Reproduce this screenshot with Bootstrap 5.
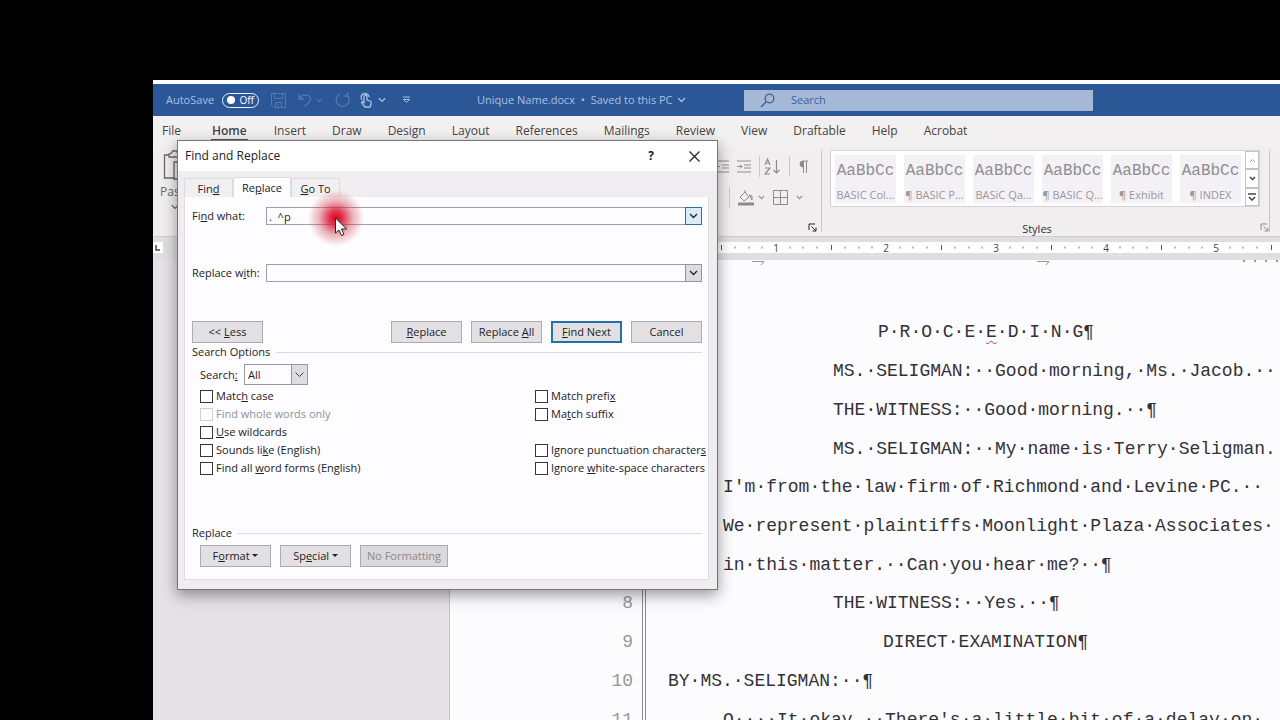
<!DOCTYPE html>
<html lang="en">
<head>
<meta charset="utf-8">
<meta name="viewport" content="width=device-width, initial-scale=1">
<title>Unique Name.docx</title>
<link href="https://cdn.jsdelivr.net/npm/bootstrap@5.3.0/dist/css/bootstrap.min.css" rel="stylesheet">
<style>
  body { background:#000; font-family:"Open Sans","Noto Sans",sans-serif; font-size:12px; line-height:16px; color:#444; }
  button, input, select { font:inherit; color:inherit; }
  svg { display:block; flex:none; fill:none; stroke:currentColor; }
  .desk { padding:80px 0 0 153px; }
  .word-window { background:#e4e2e5; border-top:4px solid #fff; }
  .word-window > :not(:last-child) { flex:none; }

  /* title bar */
  .title-bar { display:grid; grid-template-columns:324fr 267fr 349fr 187fr; height:32px; align-items:center; background:#2b5797; color:#a9c0e4; font-size:11px; }
  .title-bar button { background:none; border:0; padding:0; color:inherit; }
  .title-bar .faint { color:#5378b4; }
  .title-bar .switch { width:37px; height:15px; border:1px solid #eaf0fa; border-radius:8px; color:#fff; font-size:10px; line-height:12px; }
  .knob { width:8px; height:8px; border-radius:50%; background:#fff; }
  .save-icon { margin-left:12px; }
  .search-box { height:21px; background:#a5b9d7; color:#3c5f9c; }
  .search-box input { background:none; border:0; outline:0; padding:0; min-width:0; }
  .search-box input::placeholder { color:#3c5f9c; opacity:1; }

  /* ribbon */
  .ribbon-tabs { height:30px; gap:26px; padding-left:9px; background:#f2f0f1; }
  .ribbon-tabs a { color:#444; text-decoration:none; height:25px; line-height:30px; }
  .ribbon-tabs a.active { font-weight:600; padding:0 1px; border-bottom:2px solid #555; }
  .ribbon { height:91px; background:#f0eeef; color:#8d8b8d; display:grid; grid-template-columns:562px 106px auto 1fr; border-bottom:1px solid #cfcdd0; }
  .ribbon button { background:none; border:0; padding:0; color:inherit; }
  .ribbon .paste { margin-left:7px; gap:4px; color:#6a686a; }
  .rule-v { width:1px; background:#c9c7ca; }
  .rule-v.short { height:21px; }
  .para-group { padding-top:5px; }
  .para-row { height:31px; }
  .para-row.second { padding-left:14px; }
  .launch-row { margin-top:10px; }
  .gallery { border:1px solid #d3d1d4; background:#fff; height:57px; }
  .tiles { gap:8px; padding:0 4px; }
  .ribbon .style-tile { width:61px; height:48px; background:#f3f1f5; color:#99979a; overflow:hidden; white-space:nowrap; font-size:11px; }
  .style-tile b { display:block; font:16px/32px "Liberation Mono",monospace; color:#8f8d90; }
  .ribbon .gal-step { width:14px; flex:1; border:1px solid #c4c2c5; color:#444; }
  .group-name { font-size:11px; line-height:12px; color:#333; }

  /* ruler and page */
  .ruler { height:23px; padding:5px 0 7px; background:#e0dee1; }
  .ruler-strip { background:#fff; height:11px; margin-left:286px; padding-left:272px; min-width:0; }
  .inch { flex:none; width:110px; position:relative; font-size:10px; line-height:12px; text-align:center; color:#444; }
  .inch svg { position:absolute; left:0; top:0; }
  .corner { width:10px; background:#fff; color:#444; }
  .paper { background:#fcfbfe; border-left:1px solid #c4c2c6; margin-left:296px; min-width:0; flex:1; font-family:"Liberation Mono","DejaVu Sans Mono",monospace; font-size:18px; line-height:20px; color:#333136; }
  .numbers { width:183px; color:#98969a; }
  .margin-rule { width:4px; border:solid #8b898d; border-width:0 1px; margin-left:9px; }
  .lines { display:grid; grid-template-rows:repeat(11,1fr); height:426px; align-items:center; white-space:pre; }
  .lines p { margin:0; }
  .header-line { height:53px; color:#98969a; }
  .text-column { padding-left:22px; }
  .ind-1 { padding-left:55px; } .ind-3 { padding-left:165px; } .mid-a { padding-left:210px; } .mid-b { padding-left:215px; }
  .spell { text-decoration:underline wavy #c8324e 1px; text-underline-offset:3px; }

  /* dialog */
  .find-dialog { position:absolute; left:177px; top:140px; width:541px; background:#efedf0; border:1px solid #77757a; box-shadow:0 5px 14px rgba(0,0,0,.4); font-size:11px; color:#222; padding:0 8px 9px 6px; }
  .dlg-title { height:30px; margin:0 -8px 0 -6px; padding:0 16px 0 7px; gap:32px; background:#fff; font-size:12px; }
  .dlg-title button { background:none; border:0; padding:0; width:12px; }
  .dlg-tabs { height:26px; }
  .dlg-tabs button { border:1px solid #dddbde; border-bottom:0; background:#f1eff2; padding:0; height:19px; line-height:17px; width:49px; }
  .dlg-tabs button.active { background:#fdfcfe; height:20px; width:58px; }
  .pane { background:#fdfcfe; border:1px solid #dedce0; border-top:0; padding:10px 6px 12px 7px; }
  .field label { width:74px; }
  .field { height:18px; margin-bottom:39px; }
  .field input { flex:1; min-width:0; height:18px; border:1px solid #a09ea2; border-right:0; background:#fdfcfe; padding:0 2px; outline:0; }
  .drop { width:17px; height:18px; padding:0; border:1px solid #96949a; background:#dedce0; }
  .drop.hot { border-color:#2c7292; background:#d8edf8; }
  .btn-row { gap:9px; }
  .dlg-btn { width:71px; height:22px; padding:0; border:1px solid #adabb0; background:#e2e0e3; line-height:18px; }
  .dlg-btn.main { border:2px solid #2272a6; }
  .dlg-btn:disabled { width:88px; color:#8c8a8e; background:#dad8dc; }
  .legend-row { height:16px; gap:6px; margin-top:1px; }
  .legend-row::after { content:""; flex:1; height:1px; background:#dddbdf; }
  .direction { margin:4px 0 2px; padding-left:8px; }
  .direction label { width:44px; }
  .find-dialog select { appearance:none; width:64px; height:21px; padding:0 3px; border:1px solid #9a989c; border-radius:0; outline:0;
    background:url("data:image/svg+xml,%3Csvg xmlns='http://www.w3.org/2000/svg' width='16' height='19'%3E%3Cpath d='M0 0h16v19H0z' fill='%23dedce0'/%3E%3Cpath d='M.5 0v19' stroke='%23989698'/%3E%3Cpath d='M4.500 7.500l4 4 4-4' fill='none' stroke='%23444'/%3E%3C/svg%3E") right center no-repeat #fdfcfe; }
  .opts { display:grid; grid-template-columns:335px 1fr; grid-template-rows:repeat(5,18px); align-items:center; padding-left:8px; white-space:nowrap; }
  .opts label { display:flex; align-items:center; gap:3px; }
  .opts input { appearance:none; width:13px; height:13px; margin:0; border:1px solid #39373b; background:#fff; }
  .opts .off { color:#929094; } .opts .off input { border-color:#cfcdd1; }
  .glow { position:absolute; left:308px; top:190px; width:56px; height:56px; border-radius:50%; background:radial-gradient(closest-side,#d8001e 0,#dc1434d9 25%,#d0405066 60%,#c0606000 100%); pointer-events:none; }
  .pointer { position:absolute; left:334px; top:217px; pointer-events:none; }
</style>
</head>
<body>
<svg width="0" height="0" class="position-absolute">
  <symbol id="chev" viewBox="0 0 9 6"><path d="M1 1l3.500 3.500L8 1" stroke-width="1.300"/></symbol>
  <symbol id="ticks" viewBox="0 0 110 11"><path d="M.5 3v5" stroke="#555"/><path d="M14 4.500v2M28 4.500v2M41 4.500v2M69 4.500v2M82 4.500v2M96 4.500v2" stroke="#777"/></symbol>
  <symbol id="launch" viewBox="0 0 9 9"><path d="M1 7V1h6M3.500 3.500L8 8M8 4.500V8H4.500"/></symbol>
</svg>

<div class="desk overflow-hidden position-relative vh-100">
<main class="word-window h-100 d-flex flex-column">
  <header class="title-bar">
    <div class="d-flex align-items-center" style="padding-left:13px">
      <label for="autosave">AutoSave</label>
      <button id="autosave" class="switch d-flex align-items-center justify-content-between px-1 ms-2"><span class="knob"></span>Off</button>
      <button class="faint save-icon" aria-label="Save"><svg width="15" height="15"><path d="M.5.5h14v14H3l-2.500-2.500zM3.500.5v5h8v-5M4.500 14.500v-5h6v5M7 11v3"/></svg></button>
      <button class="faint save-icon" aria-label="Undo"><svg width="14" height="14" stroke-width="1.300"><path d="M1 1v5h5M1.500 5.500C4 1 12 1 12.500 6c0 3-3 5-6 7.500"/></svg></button>
      <svg class="faint ms-1" width="7" height="5"><use href="#chev"/></svg>
      <button class="faint save-icon" aria-label="Repeat"><svg width="16" height="16" stroke-width="1.300"><path d="M5 2a6.500 6.500 0 1 0 7 1M12.500 0v4h-4"/></svg></button>
      <button class="ms-2" aria-label="Touch mode"><svg width="15" height="16"><path d="M3 8a4 4 0 1 1 7-3M5 10V4.500a1.500 1.500 0 0 1 3 0V8l3 1q1.500.5 1 3l-1 3H6L2.500 10.500q1-1.500 2.500 0z" stroke-width="1.300"/></svg></button>
      <svg class="ms-1" width="8" height="6"><use href="#chev"/></svg>
      <button class="ms-3" aria-label="Customize toolbar"><svg width="9" height="8"><path d="M1 1h7M1.500 3.500l3 3 3-3z"/></svg></button>
    </div>
    <div class="d-flex align-items-center text-nowrap">Unique Name.docx&nbsp; •&nbsp; Saved to this PC<svg class="ms-1" width="9" height="6"><use href="#chev"/></svg></div>
    <div class="search-box d-flex align-items-center">
      <svg class="ms-3 me-3" width="15" height="15" stroke-width="1.300"><circle cx="9.500" cy="5.500" r="4.300"/><path d="M6.500 8.500L1 14"/></svg>
      <input class="flex-grow-1" type="text" placeholder="Search" aria-label="Search">
    </div>
  </header>

  <nav class="ribbon-tabs d-flex">
    <a href="#" class="me-1">File</a><a href="#" class="active">Home</a><a href="#">Insert</a><a href="#">Draw</a><a href="#">Design</a><a href="#">Layout</a><a href="#">References</a><a href="#">Mailings</a><a href="#">Review</a><a href="#">View</a><a href="#">Draftable</a><a href="#">Help</a><a href="#">Acrobat</a>
  </nav>

  <section class="ribbon">
    <div class="pt-1">
      <button class="paste d-flex flex-column align-items-center">
        <svg width="28" height="30"><path d="M8 5H3.500v23H14M20 5h4v5M8 7V4q3 0 3.500-3h4Q16 4 20 4v3zM13 12h12v17H13z" stroke-width="1.300"/></svg>
        <span>Paste</span><svg width="8" height="6"><use href="#chev"/></svg>
      </button>
    </div>
    <div class="para-group d-flex flex-column">
      <div class="para-row d-flex align-items-center">
        <svg width="14" height="13"><path d="M0 1h14M7 5h7M7 8h7M0 12h14M5 6.500H0"/></svg>
        <svg class="ms-2" width="14" height="13"><path d="M0 1h14M7 5h7M7 8h7M0 12h14M0 6.500h5M3 4.500l2 2-2 2"/></svg>
        <span class="rule-v short ms-2"></span>
        <svg class="ms-1" width="17" height="17" stroke-width="1.200"><path d="M1 7L3.500 1 6 7M2 5h3M1 10h5l-5 6h5M12.500 2v13M9.500 12l3 3 3-3"/></svg>
        <span class="rule-v short ms-2"></span>
        <svg class="ms-2" width="11" height="13"><path d="M5 1H10M5.500 1v12M8.500 1v12"/><path d="M5 1a3 3 0 0 0 0 6z" fill="currentColor"/></svg>
      </div>
      <div class="para-row second d-flex align-items-center">
        <span class="rule-v short"></span>
        <svg class="ms-2" width="16" height="16"><path d="M2 7l5-5 4 5-5 4zM7 2V0M12 6l2 4V6l-3-1"/><path d="M0 14h16" stroke-width="3"/></svg>
        <svg class="ms-1" width="7" height="5"><use href="#chev"/></svg>
        <svg class="ms-2" width="15" height="15"><path d="M.5.5h14v14H.5zM7.500 1v13M1 7.500h13"/></svg>
        <svg class="ms-2" width="7" height="5"><use href="#chev"/></svg>
      </div>
      <div class="launch-row d-flex justify-content-end pe-1 text-dark"><svg width="9" height="9"><use href="#launch"/></svg></div>
    </div>
    <div class="d-flex">
      <span class="rule-v my-1 me-2"></span>
      <div class="pt-1">
        <div class="gallery d-flex">
          <div class="tiles d-flex align-items-center">
            <button class="style-tile"><b>AaBbCc</b>BASIC Col...</button>
            <button class="style-tile"><b>AaBbCc</b>¶ BASIC P...</button>
            <button class="style-tile"><b>AaBbCc</b>BASiC Qa...</button>
            <button class="style-tile"><b>AaBbCc</b>¶ BASIC Q...</button>
            <button class="style-tile"><b>AaBbCc</b>¶ Exhibit</button>
            <button class="style-tile"><b>AaBbCc</b>¶ INDEX</button>
          </div>
          <div class="d-flex flex-column">
            <button class="gal-step" aria-label="Up"><svg class="mx-auto opacity-50" width="7" height="5" viewBox="0 0 7 5"><path d="M1 4l2.500-2.500L6 4"/></svg></button>
            <button class="gal-step" aria-label="Down"><svg class="mx-auto" width="7" height="5" viewBox="0 0 7 5" stroke-width="1.500"><path d="M1 1l2.500 2.500L6 1"/></svg></button>
            <button class="gal-step" aria-label="More"><svg class="mx-auto" width="8" height="8" stroke-width="1.500"><path d="M0 1h8M1 4l3 3 3-3"/></svg></button>
          </div>
        </div>
        <div class="group-name text-center mt-3 pe-3">Styles</div>
      </div>
      <div class="d-flex align-items-end pb-1"><svg width="9" height="9"><use href="#launch"/></svg></div>
      <span class="rule-v my-1"></span>
    </div>
  </section>

  <div class="ruler d-flex">
    <div class="corner"><svg width="10" height="11"><path d="M3 3v5h4" stroke-width="1.500"/></svg></div>
    <div class="ruler-strip d-flex flex-grow-1">
      <div class="inch"><svg width="110" height="11"><use href="#ticks"/></svg>1</div>
      <div class="inch"><svg width="110" height="11"><use href="#ticks"/></svg>2</div>
      <div class="inch"><svg width="110" height="11"><use href="#ticks"/></svg>3</div>
      <div class="inch"><svg width="110" height="11"><use href="#ticks"/></svg>4</div>
      <div class="inch"><svg width="110" height="11"><use href="#ticks"/></svg>5</div>
      <div class="inch"><svg width="110" height="11"><use href="#ticks"/></svg></div>
    </div>
  </div>

  <div class="d-flex flex-grow-1 overflow-hidden">
    <article class="paper d-flex">
      <div class="numbers flex-shrink-0 text-end">
        <div class="header-line"></div>
        <div class="lines"><p>1</p><p>2</p><p>3</p><p>4</p><p>5</p><p>6</p><p>7</p><p>8</p><p>9</p><p>10</p><p>11</p></div>
      </div>
      <div class="margin-rule flex-shrink-0"></div>
      <div class="text-column">
        <div class="header-line d-flex">
          <svg width="600" height="6"><path d="M84 1.500h12l-3 3.500M369 1.500h12l-3 3.500"/><path d="M575 1h2M586 1h2M597 1h2" stroke-width="2"/></svg>
          <svg width="20" height="6"><path d="M8 1h2" stroke-width="2"/></svg>
        </div>
        <div class="lines"><p class="mid-a">P·R·O·C·E·<span class="spell">E</span>·D·I·N·G¶</p><p class="ind-3">MS.·SELIGMAN:··Good·morning,·Ms.·Jacob.··</p><p class="ind-3">THE·WITNESS:··Good·morning.··¶</p><p class="ind-3">MS.·SELIGMAN:··My·name·is·Terry·Seligman.</p><p class="ind-1">I'm·from·the·law·firm·of·Richmond·and·Levine·PC.··</p><p class="ind-1">We·represent·plaintiffs·Moonlight·Plaza·Associates·</p><p class="ind-1">in·this·matter.··Can·you·hear·me?··¶</p><p class="ind-3">THE·WITNESS:··Yes.··¶</p><p class="mid-b">DIRECT·EXAMINATION¶</p><p>BY·MS.·SELIGMAN:··¶</p><p class="ind-1">Q····It·okay.··There's·a·little·bit·of·a·delay·on·</p></div>
      </div>
    </article>
  </div>
</main>

<section class="find-dialog" role="dialog" aria-label="Find and Replace">
  <div class="dlg-title d-flex align-items-center">
    <span class="me-auto">Find and Replace</span>
    <button class="fw-bold">?</button>
    <button aria-label="Close"><svg width="11" height="11"><path d="M.5.5l10 10M10.500.5l-10 10" stroke-width="1.200"/></svg></button>
  </div>
  <div class="dlg-tabs d-flex align-items-end">
    <button>Fin<u>d</u></button><button class="active">Re<u>p</u>lace</button><button><u>G</u>o To</button>
  </div>
  <div class="pane">
    <div class="field d-flex align-items-center"><label for="what">Fi<u>n</u>d what:</label><input id="what" type="text" value=".  ^p"><button class="drop hot" aria-label="Recent searches"><svg class="mx-auto" width="9" height="6"><use href="#chev"/></svg></button></div>
    <div class="field d-flex align-items-center"><label for="with">Replace w<u>i</u>th:</label><input id="with" type="text"><button class="drop" aria-label="Recent replacements"><svg class="mx-auto" width="9" height="6"><use href="#chev"/></svg></button></div>
    <div class="btn-row d-flex">
      <button class="dlg-btn me-auto">&lt;&lt; <u>L</u>ess</button>
      <button class="dlg-btn"><u>R</u>eplace</button>
      <button class="dlg-btn">Replace <u>A</u>ll</button>
      <button class="dlg-btn main"><u>F</u>ind Next</button>
      <button class="dlg-btn">Cancel</button>
    </div>
    <div class="legend-row d-flex align-items-center">Search Options</div>
    <div class="direction d-flex align-items-center"><label for="dir">Search<u>:</u></label><select id="dir"><option>All</option></select></div>
    <div class="opts">
      <label><input type="checkbox"><span>Matc<u>h</u> case</span></label>
      <label><input type="checkbox"><span>Match prefi<u>x</u></span></label>
      <label class="off"><input type="checkbox" disabled><span>Find whole words only</span></label>
      <label><input type="checkbox"><span>Ma<u>t</u>ch suffix</span></label>
      <label><input type="checkbox"><span><u>U</u>se wildcards</span></label>
      <span></span>
      <label><input type="checkbox"><span>Sounds li<u>k</u>e (English)</span></label>
      <label><input type="checkbox"><span>Ignore punctuation character<u>s</u></span></label>
      <label><input type="checkbox"><span>Find all <u>w</u>ord forms (English)</span></label>
      <label><input type="checkbox"><span>Ignore <u>w</u>hite-space characters</span></label>
    </div>
    <div class="legend-row d-flex align-items-center mt-5">Replace</div>
    <div class="btn-row d-flex align-items-end ps-2 mt-1">
      <button class="dlg-btn dropdown-toggle">F<u>o</u>rmat</button>
      <button class="dlg-btn dropdown-toggle">Sp<u>e</u>cial</button>
      <button class="dlg-btn" disabled>No Formatting</button>
    </div>
  </div>
</section>
<div class="glow"></div>
<svg class="pointer" width="14" height="20" aria-hidden="true"><path d="M1.500 1v15l3.500-3 2.500 5.500 2.500-1-2.500-5.500h5z" fill="#fff" stroke="#222"/></svg>
</div>
<script src="https://cdn.jsdelivr.net/npm/bootstrap@5.3.0/dist/js/bootstrap.bundle.min.js"></script>
</body>
</html>
